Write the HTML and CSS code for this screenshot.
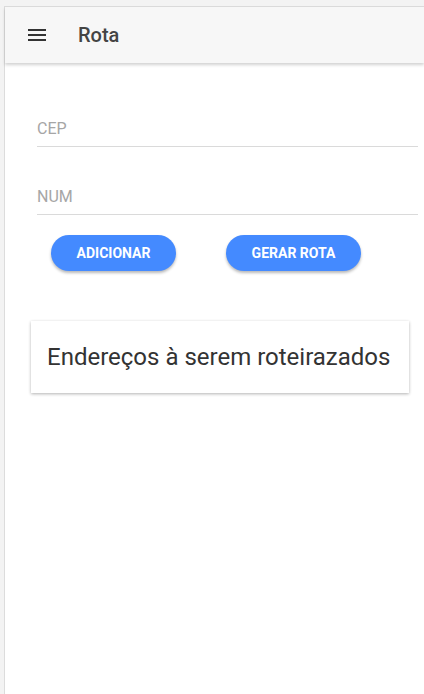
FILE: index.html
```html
<!DOCTYPE html>
<html lang="pt">
<head>
<meta charset="utf-8">
<title>Rota</title>
<link rel="stylesheet" href="styles.css">
</head>
<body>
<div class="app">
  <header class="toolbar">
    <svg class="menu" width="18" height="12" viewBox="0 0 18 12" aria-hidden="true">
      <rect x="0" y="0" width="18" height="2" fill="#333"/>
      <rect x="0" y="5" width="18" height="2" fill="#333"/>
      <rect x="0" y="10" width="18" height="2" fill="#333"/>
    </svg>
    <span class="title">Rota</span>
  </header>
  <main class="content">
    <div class="field"><span class="placeholder">CEP</span></div>
    <div class="field field-2"><span class="placeholder">NUM</span></div>
    <div class="actions">
      <button class="btn btn-add">ADICIONAR</button>
      <button class="btn btn-route">GERAR ROTA</button>
    </div>
    <section class="card">Endereços à serem roteirazados</section>
  </main>
</div>
</body>
</html>
```
FILE: styles.css
```css
html, body {
  margin: 0;
  height: 100%;
}
body {
  background: #f3f3f3;
  padding: 6px 0 0 4px;
  box-sizing: border-box;
  font-family: Roboto, "Liberation Sans", sans-serif;
  overflow: hidden;
}
.app {
  height: 100%;
  background: #fff;
  border-left: 1px solid #dcdcdc;
  border-top: 1px solid #dcdcdc;
  display: flex;
  flex-direction: column;
}
.toolbar {
  height: 56px;
  background: #f7f7f7;
  display: flex;
  align-items: center;
  padding-left: 23px;
  gap: 32px;
  box-shadow: 0 2px 3px rgba(0,0,0,0.18);
  position: relative;
  z-index: 1;
}
.menu { display: block; }
.title {
  font-size: 20px;
  color: #444;
  font-weight: 500;
}
.content {
  padding: 0 6px 0 32px;
  display: flex;
  flex-direction: column;
}
.field {
  margin-top: 56px;
  border-bottom: 1px solid #dadada;
  padding-bottom: 7px;
  line-height: 20px;
}
.field-2 { margin-top: 40px; }
.placeholder {
  font-size: 16px;
  color: #a6a6a6;
}
.actions {
  display: flex;
  gap: 50px;
  margin-top: 20px;
  padding-left: 14px;
}
.btn {
  height: 36px;
  border: none;
  border-radius: 18px;
  background: #448aff;
  color: #fff;
  font-family: Roboto, "Liberation Sans", sans-serif;
  font-weight: 700;
  font-size: 14px;
  box-shadow: 0 2px 3px rgba(0,0,0,0.28);
  padding: 0;
}
.btn-add { width: 125px; }
.btn-route { width: 135px; }
.card {
  margin: 50px 9px 0 -6px;
  height: 72px;
  box-sizing: border-box;
  padding-left: 16px;
  display: flex;
  align-items: center;
  font-size: 24px;
  color: #333;
  box-shadow: 0 1px 3px rgba(0,0,0,0.3);
}
```
